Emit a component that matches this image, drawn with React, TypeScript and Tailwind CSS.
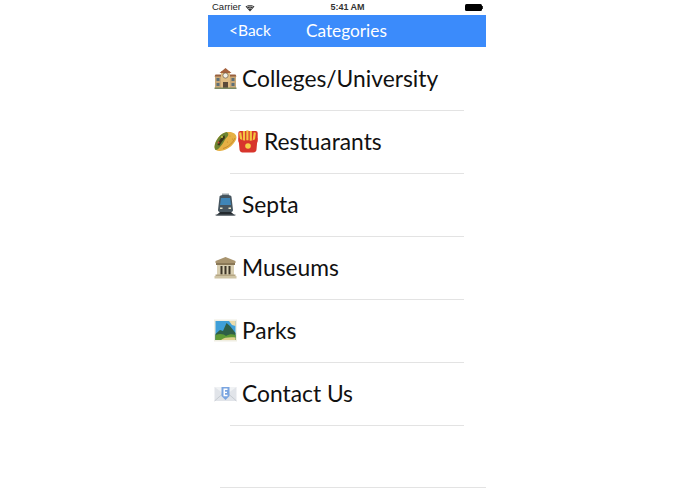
const font = { fontFamily: "Lato, sans-serif" };

function School() {
  return (
    <svg width="23" height="23" viewBox="0 0 23 23" className="shrink-0">
      <rect x="1" y="8" width="21" height="13" fill="#c9a877" />
      <rect x="7" y="4" width="9" height="17" fill="#e0bd84" />
      <path d="M5.5 6 L11.5 1 L17.5 6 Z" fill="#a5623e" />
      <path d="M0.5 9.5 H7 V7.5 H1.5 Z M16 7.5 V9.5 H22.5 L21.5 7.5 Z" fill="#98603f" />
      <circle cx="11.5" cy="8.5" r="2.6" fill="#f2efe6" stroke="#6b5a45" strokeWidth="0.7" />
      <rect x="2.5" y="11" width="3" height="3" fill="#5d6f78" />
      <rect x="2.5" y="16" width="3" height="3" fill="#5d6f78" />
      <rect x="17.5" y="11" width="3" height="3" fill="#5d6f78" />
      <rect x="17.5" y="16" width="3" height="3" fill="#5d6f78" />
      <rect x="9" y="15" width="5" height="6" fill="#5b4a3a" />
      <rect x="0.5" y="20.5" width="22" height="1.5" fill="#7d8a63" />
    </svg>
  );
}

function Taco() {
  return (
    <svg width="23" height="23" viewBox="0 0 23 23" className="shrink-0">
      <path d="M0.5 17 C1 10 7 2.5 14 2 C19 1.5 22.5 4 22.5 7.5 C22 13 14 20.5 6 21 C3 21.2 0.5 20 0.5 17 Z" fill="#e5b044" />
      <path d="M0.5 17 C1 10 7 3 12.5 2 C15 3 15 6 12 8 C10 11 9 14 6 17 C4 19.5 2 20.5 1 19.5 Z" fill="#6d8431" />
      <path d="M3.5 15 C4.5 11 7.5 7 10.5 5.2 L11 8 L8 11.5 L5.5 15.5 Z" fill="#3a3419" />
      <circle cx="4.5" cy="12.5" r="1" fill="#c9472f" />
      <circle cx="8" cy="7" r="0.9" fill="#d9d04a" />
      <path d="M9 18.5 C14.5 17 19 12.5 21 8" stroke="#c98a2c" strokeWidth="1" fill="none" />
      <circle cx="16" cy="6" r="0.6" fill="#c98a2c" />
      <circle cx="18.5" cy="9" r="0.6" fill="#c98a2c" />
      <circle cx="13.5" cy="12" r="0.6" fill="#c98a2c" />
    </svg>
  );
}

function Fries() {
  return (
    <svg width="22" height="23" viewBox="0 0 22 23" className="shrink-0">
      <rect x="1.3" y="1" width="19.4" height="12" rx="2" fill="#d8352c" />
      <g fill="#f4c542">
        <rect x="2.7" y="2.5" width="2.2" height="9" transform="rotate(-8 3.5 7)" />
        <rect x="5.9" y="1" width="2.2" height="10" />
        <rect x="9.3" y="0.3" width="2.2" height="10" />
        <rect x="12.7" y="1" width="2.2" height="10" />
        <rect x="16.1" y="2.5" width="2.2" height="9" transform="rotate(8 17.5 7)" />
      </g>
      <path d="M1.5 8 C6.5 12 15.5 12 20.5 8 L19.5 19.5 C19.3 22 17.5 22.5 15 22.5 H7 C4.5 22.5 2.7 22 2.5 19.5 Z" fill="#d8352c" />
      <circle cx="11" cy="16" r="2.8" fill="#f6cf47" />
    </svg>
  );
}

function Train() {
  return (
    <svg width="23" height="23" viewBox="0 0 23 23" className="shrink-0">
      <rect x="8" y="0.5" width="7" height="2" fill="#9aa3a8" />
      <path d="M5.5 4 C5.5 2.5 7 2 11.5 2 C16 2 17.5 2.5 17.5 4 L19 17 C19 18.5 18 19 16.5 19 H6.5 C5 19 4 18.5 4 17 Z" fill="#46555f" />
      <path d="M7 5 H16 L17 12 H6 Z" fill="#3f86b8" />
      <rect x="6" y="14.5" width="2.5" height="1.5" fill="#e8e6c9" />
      <rect x="14.5" y="14.5" width="2.5" height="1.5" fill="#e8e6c9" />
      <path d="M6 19 H17 L21 22.5 H2 Z" fill="#23292e" />
      <path d="M1.5 22 H21.5" stroke="#5d676d" strokeWidth="1" />
    </svg>
  );
}

function Museum() {
  return (
    <svg width="23" height="23" viewBox="0 0 23 23" className="shrink-0">
      <path d="M11.5 1 L21.5 5 V7 H1.5 V5 Z" fill="#a8946f" />
      <rect x="2" y="7" width="19" height="2" fill="#8a7857" />
      <rect x="3" y="9" width="17" height="10" fill="#d9cfb2" />
      <g fill="#3e3628">
        <rect x="6.5" y="10" width="2" height="8.5" />
        <rect x="10.5" y="10" width="2" height="8.5" />
        <rect x="14.5" y="10" width="2" height="8.5" />
      </g>
      <rect x="1.5" y="18.5" width="20" height="1.5" fill="#b5a684" />
      <rect x="0.5" y="20" width="22" height="2.5" fill="#cfc4a4" />
    </svg>
  );
}

function Park() {
  return (
    <svg width="23" height="23" viewBox="0 0 23 23" className="shrink-0">
      <rect x="0" y="0.5" width="23" height="22" fill="#f0eee2" />
      <rect x="1.5" y="2" width="20" height="19" fill="#3f9fd8" />
      <path d="M15 2 H21.5 V7 L18 6 Z" fill="#ecdcaa" />
      <path d="M1.5 15 L6 11 L9 12 L12.5 4 L16 7 L21.5 14 V21 H1.5 Z" fill="#2f5f46" />
      <path d="M1.5 16 C6 14 10 15 12 17 C15 15 19 15 21.5 16 V21 H1.5 Z" fill="#5f9a35" />
      <path d="M7 21 C10 18.5 15 18 21.5 18.5 V21 Z" fill="#e0d08f" />
    </svg>
  );
}

function Mail() {
  return (
    <svg width="23" height="23" viewBox="0 0 23 23" className="shrink-0">
      <rect x="0.5" y="5" width="22" height="14" fill="#e1e4e9" />
      <path d="M0.5 5 L11.5 13 L22.5 5 Z" fill="#f0f2f4" />
      <path d="M0.5 19 L9 11.5 M22.5 19 L14 11.5" stroke="#bfc5cc" strokeWidth="0.8" />
      <path d="M7.5 5 H15.5 V14 L11.5 18 L7.5 14 Z" fill="#7aa5e0" />
      <path d="M9.5 6.5 H13.5 V8 H11 V9.7 H13 V11 H11 V12.7 H13.5 V14.2 H9.5 Z" fill="#ffffff" />
    </svg>
  );
}

const rows = [
  { icons: [<School key="a" />], label: "Colleges/University" },
  { icons: [<Taco key="a" />, <Fries key="b" />], label: "Restuarants" },
  { icons: [<Train key="a" />], label: "Septa" },
  { icons: [<Museum key="a" />], label: "Museums" },
  { icons: [<Park key="a" />], label: "Parks" },
  { icons: [<Mail key="a" />], label: "Contact Us" },
];

export default function App() {
  return (
    <div className="h-[494px] w-[695px] overflow-hidden bg-white pl-[208px]" style={font}>
      <div className="flex w-[278px] flex-col">
        <div className="grid h-[15px] grid-cols-[1fr_auto_1fr] items-center pl-[4px] pr-[3px] text-[#222]" style={{ fontFamily: "'Liberation Sans', sans-serif" }}>
          <div className="flex items-center gap-[4px] text-[9.5px]">
            <span>Carrier</span>
            <svg width="10" height="8" viewBox="0 0 10 8">
              <path d="M5 7.5 L0.5 2.6 C3 0.4 7 0.4 9.5 2.6 Z" fill="#333" />
              <path d="M2 3 C3.8 1.8 6.2 1.8 8 3" stroke="#fff" strokeWidth="0.7" fill="none" />
              <path d="M3.3 4.6 C4.3 3.9 5.7 3.9 6.7 4.6" stroke="#fff" strokeWidth="0.7" fill="none" />
            </svg>
          </div>
          <span className="text-[9px] font-bold text-[#333]">5:41 AM</span>
          <div className="flex items-center justify-end">
            <div className="h-[7px] w-[17px] rounded-[1.5px] bg-black" />
            <div className="h-[3px] w-[1px] bg-[#333]" />
          </div>
        </div>
        <div className="flex h-[32px] items-center bg-[#3b8bfb] text-white">
          <span className="ml-[21px] text-[15.5px]">&lt;Back</span>
          <span className="ml-[35px] text-[17.3px]">Categories</span>
        </div>
        {rows.map((r) => (
          <div key={r.label} className="flex h-[63px] flex-col">
            <div className="flex grow items-center pl-[6px]">
              {r.icons}
              <span className="ml-[5px] text-[22.8px] leading-none text-[#111]">{r.label}</span>
            </div>
            <div className="ml-[22px] h-px w-[234px] translate-y-px bg-[#e3e3e3]" />
          </div>
        ))}
        <div className="ml-[12px] mt-[62px] h-px w-[266px] bg-[#e3e3e3]" />
      </div>
    </div>
  );
}
